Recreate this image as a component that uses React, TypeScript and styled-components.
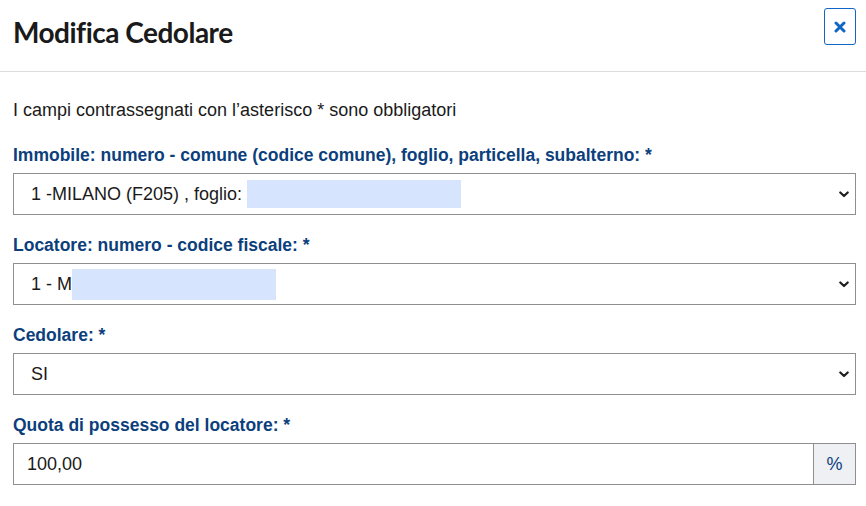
import React from "react";
import styled, { createGlobalStyle } from "styled-components";

const GlobalStyle = createGlobalStyle`
  html, body {
    margin: 0;
    padding: 0;
    background: #ffffff;
  }
  body {
    font-family: "Liberation Sans", Arial, Helvetica, sans-serif;
    color: #1a1a1a;
  }
  * { box-sizing: border-box; }
`;

const Modal = styled.div`
  width: 866px;
  height: 506px;
  background: #fff;
  overflow: hidden;
`;

const Header = styled.header`
  display: flex;
  align-items: flex-start;
  justify-content: space-between;
  padding: 8px 10px 0 13px;
  height: 72px;
  border-bottom: 1px solid #dcdcdc;
`;

const Title = styled.h1`
  margin: 0;
  padding-top: 6px;
  font-family: Lato, "Open Sans", sans-serif;
  font-weight: 700;
  font-size: 28px;
  line-height: 36px;
  color: #1a1a1a;
  letter-spacing: -0.5px;
`;

const CloseButton = styled.button`
  width: 32px;
  height: 37px;
  padding: 0;
  border: 1px solid #0f66c7;
  border-radius: 3px;
  background: #fff;
  display: flex;
  align-items: center;
  justify-content: center;
  cursor: pointer;
`;

const Body = styled.div`
  padding: 26px 10px 0 13px;
  display: flex;
  flex-direction: column;
`;

const Note = styled.p`
  margin: 0 0 21px;
  font-size: 18px;
  line-height: 24px;
  color: #1a1a1a;
`;

const Field = styled.div`
  display: flex;
  flex-direction: column;
  margin-bottom: 18px;
`;

const Label = styled.label`
  font-size: 17.5px;
  font-weight: 700;
  line-height: 24px;
  color: #0c3f7c;
  margin-bottom: 6px;
`;

const SelectBox = styled.div`
  height: 42px;
  border: 1px solid #8f8f8f;
  display: flex;
  align-items: center;
  padding: 0 6px 0 17px;
  font-size: 18px;
  color: #1a1a1a;
  background: #fff;
`;

const Value = styled.span`
  white-space: pre;
`;

const Redacted = styled.span<{ $w: number; $h: number }>`
  display: inline-block;
  width: ${(p) => p.$w}px;
  height: ${(p) => p.$h}px;
  background: #d6e4fd;
`;

const Spacer = styled.span`
  flex: 1;
`;

const InputGroup = styled.div`
  height: 42px;
  display: flex;
  border: 1px solid #8f8f8f;
`;

const TextInput = styled.input`
  flex: 1;
  min-width: 0;
  border: none;
  outline: none;
  padding: 0 13px;
  font-family: "Liberation Sans", Arial, sans-serif;
  font-size: 18px;
  color: #1a1a1a;
  background: #fff;
`;

const Addon = styled.span`
  width: 42px;
  border-left: 1px solid #8f8f8f;
  background: #eef0f3;
  color: #0c3f7c;
  font-size: 18px;
  display: flex;
  align-items: center;
  justify-content: center;
`;

const Chevron = () => (
  <svg width="10" height="7" viewBox="0 0 10 7" aria-hidden="true">
    <path d="M1.3 1.5 L5 5 L8.7 1.5" fill="none" stroke="#1f1f1f" strokeWidth="2.2" strokeLinecap="round" strokeLinejoin="round" />
  </svg>
);

const CloseIcon = () => (
  <svg width="12" height="12" viewBox="0 0 12 12" aria-hidden="true">
    <path d="M2 2 L10 10 M10 2 L2 10" stroke="#0f66c7" strokeWidth="3" strokeLinecap="round" />
  </svg>
);

type SelectProps = { value: string; redact?: { w: number; h: number } };

const FakeSelect = ({ value, redact }: SelectProps) => (
  <SelectBox role="combobox">
    <Value>{value}</Value>
    {redact && <Redacted $w={redact.w} $h={redact.h} />}
    <Spacer />
    <Chevron />
  </SelectBox>
);

export default function App() {
  return (
    <>
      <GlobalStyle />
      <Modal>
        <Header>
          <Title>Modifica Cedolare</Title>
          <CloseButton aria-label="Chiudi">
            <CloseIcon />
          </CloseButton>
        </Header>
        <Body>
          <Note>I campi contrassegnati con l’asterisco * sono obbligatori</Note>
          <Field>
            <Label>Immobile: numero - comune (codice comune), foglio, particella, subalterno: *</Label>
            <FakeSelect value="1 -MILANO (F205) , foglio: " redact={{ w: 214, h: 28 }} />
          </Field>
          <Field>
            <Label>Locatore: numero - codice fiscale: *</Label>
            <FakeSelect value="1 - M" redact={{ w: 204, h: 31 }} />
          </Field>
          <Field>
            <Label>Cedolare: *</Label>
            <FakeSelect value="SI" />
          </Field>
          <Field>
            <Label>Quota di possesso del locatore: *</Label>
            <InputGroup>
              <TextInput defaultValue="100,00" />
              <Addon>%</Addon>
            </InputGroup>
          </Field>
        </Body>
      </Modal>
    </>
  );
}
